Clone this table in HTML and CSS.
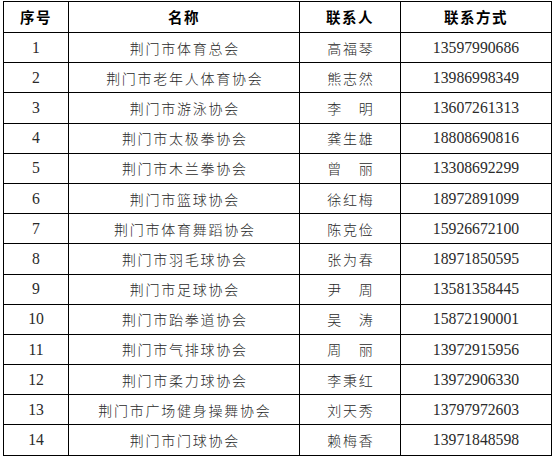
FILE: index.html
```html
<!DOCTYPE html>
<html lang="zh-CN">
<head>
<meta charset="utf-8">
<title>荆门市体育协会联系方式</title>
<link rel="stylesheet" href="styles.css">
</head>
<body>
<table class="contacts">
  <colgroup>
    <col class="c-no">
    <col class="c-name">
    <col class="c-person">
    <col class="c-phone">
  </colgroup>
  <thead>
    <tr><th>序号</th><th>名称</th><th>联系人</th><th>联系方式</th></tr>
  </thead>
  <tbody>
    <tr><td class="num">1</td><td class="zh">荆门市体育总会</td><td class="zh">高福琴</td><td class="num">13597990686</td></tr>
    <tr><td class="num">2</td><td class="zh">荆门市老年人体育协会</td><td class="zh">熊志然</td><td class="num">13986998349</td></tr>
    <tr><td class="num">3</td><td class="zh">荆门市游泳协会</td><td class="zh">李　明</td><td class="num">13607261313</td></tr>
    <tr><td class="num">4</td><td class="zh">荆门市太极拳协会</td><td class="zh">龚生雄</td><td class="num">18808690816</td></tr>
    <tr><td class="num">5</td><td class="zh">荆门市木兰拳协会</td><td class="zh">曾　丽</td><td class="num">13308692299</td></tr>
    <tr><td class="num">6</td><td class="zh">荆门市篮球协会</td><td class="zh">徐红梅</td><td class="num">18972891099</td></tr>
    <tr><td class="num">7</td><td class="zh">荆门市体育舞蹈协会</td><td class="zh">陈克俭</td><td class="num">15926672100</td></tr>
    <tr><td class="num">8</td><td class="zh">荆门市羽毛球协会</td><td class="zh">张为春</td><td class="num">18971850595</td></tr>
    <tr><td class="num">9</td><td class="zh">荆门市足球协会</td><td class="zh">尹　周</td><td class="num">13581358445</td></tr>
    <tr><td class="num">10</td><td class="zh">荆门市跆拳道协会</td><td class="zh">吴　涛</td><td class="num">15872190001</td></tr>
    <tr><td class="num">11</td><td class="zh">荆门市气排球协会</td><td class="zh">周　丽</td><td class="num">13972915956</td></tr>
    <tr><td class="num">12</td><td class="zh">荆门市柔力球协会</td><td class="zh">李秉红</td><td class="num">13972906330</td></tr>
    <tr><td class="num">13</td><td class="zh">荆门市广场健身操舞协会</td><td class="zh">刘天秀</td><td class="num">13797972603</td></tr>
    <tr><td class="num">14</td><td class="zh">荆门市门球协会</td><td class="zh">赖梅香</td><td class="num">13971848598</td></tr>
  </tbody>
</table>
</body>
</html>
```
FILE: styles.css
```css
html, body {
  margin: 0;
  padding: 0;
  background: #fff;
}

body {
  padding: 1px 0 0 3px;
}

.contacts {
  border-collapse: collapse;
  table-layout: fixed;
  width: 548px;
}

.c-no { width: 65px; }
.c-name { width: 231px; }
.c-person { width: 101px; }
.c-phone { width: 151px; }

.contacts th,
.contacts td {
  border: 1px solid #000;
  padding: 0;
  text-align: center;
  vertical-align: middle;
  white-space: nowrap;
}

.contacts th {
  height: 30px;
  font-family: "Noto Sans CJK SC", sans-serif;
  font-weight: 700;
  font-size: 14.5px;
  letter-spacing: 1.5px;
  color: #000;
  line-height: 1;
}

.contacts td {
  height: 29.2px;
  line-height: 1;
  color: #2a2a2a;
}

.contacts td.num {
  font-family: "Liberation Serif", serif;
  font-size: 15.7px;
}

.contacts td.zh {
  font-family: "Noto Sans CJK SC", sans-serif;
  font-weight: 300;
  font-size: 14px;
  letter-spacing: 1.75px;
  padding-left: 1.75px;
}
```
